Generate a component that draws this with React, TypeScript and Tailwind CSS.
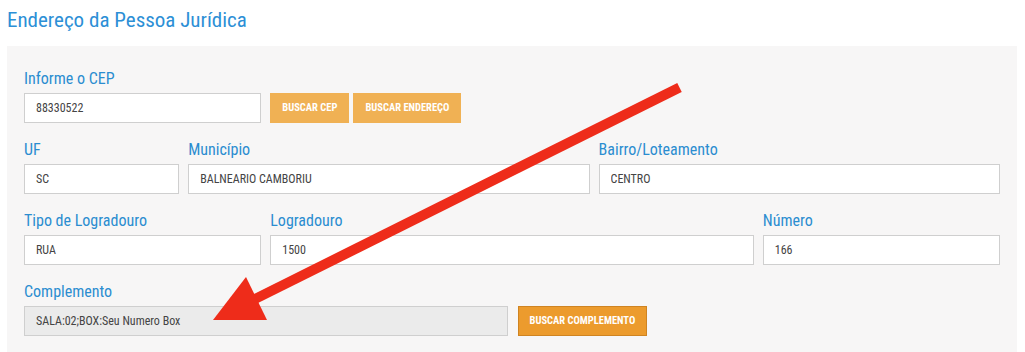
import React from "react";

const font = { fontFamily: '"Liberation Sans Narrow", "Roboto Condensed", "Liberation Sans", sans-serif' };

const Field = ({
  label,
  value,
  span,
  disabled,
}: {
  label: string;
  value: string;
  span: string;
  disabled?: boolean;
}) => (
  <div className={`${span} flex flex-col`}>
    <label className="mb-[3px] h-[22px] text-[16px] leading-[22px] text-[#2b8dd0]">{label}</label>
    <input
      readOnly
      defaultValue={value}
      className={
        disabled
          ? "h-[30px] w-full border border-[#cfcfcf] bg-[#ebebeb] px-[11px] text-[12px] text-[#444] outline-none"
          : "h-[30px] w-full border border-[#cfcfcf] bg-white px-[11px] text-[12px] text-[#444] outline-none"
      }
    />
  </div>
);

export default function App() {
  return (
    <div className="relative h-[352px] w-[1025px] overflow-hidden bg-white" style={font}>
      <h1 className="ml-[7px] mt-[7px] h-[26px] text-[21px] leading-[26px] text-[#2c8fd6]">
        Endereço da Pessoa Jurídica
      </h1>

      <div className="ml-[7px] mt-[13px] h-[320px] w-[1010px] bg-[#f7f6f6] px-[17px] pt-[22px]">
        {/* CEP */}
        <div className="grid grid-cols-12 gap-x-[9px]">
          <Field span="col-span-3" label="Informe o CEP" value="88330522" />
          <div className="col-span-9 flex items-start gap-[4px] pt-[25px]">
            <button className="h-[30px] bg-[#f0b154] px-[12px] text-[10.5px] font-bold text-white">BUSCAR CEP</button>
            <button className="h-[30px] bg-[#f0b154] px-[12px] text-[10.5px] font-bold text-white">BUSCAR ENDEREÇO</button>
          </div>
        </div>

        <div className="mt-[16px] grid grid-cols-12 gap-x-[9px]">
          <Field span="col-span-2" label="UF" value="SC" />
          <Field span="col-span-5" label="Município" value="BALNEARIO CAMBORIU" />
          <Field span="col-span-5" label="Bairro/Loteamento" value="CENTRO" />
        </div>

        <div className="mt-[16px] grid grid-cols-12 gap-x-[9px]">
          <Field span="col-span-3" label="Tipo de Logradouro" value="RUA" />
          <Field span="col-span-6" label="Logradouro" value="1500" />
          <Field span="col-span-3" label="Número" value="166" />
        </div>

        <div className="mt-[16px] grid grid-cols-12 gap-x-[9px]">
          <Field span="col-span-6" label="Complemento" value="SALA:02;BOX:Seu Numero Box" disabled />
          <div className="col-span-6 flex items-start pt-[25px]">
            <button className="ml-px h-[30px] border border-[#cf8422] bg-[#ec9b2d] px-[11px] text-[10.5px] font-bold text-white">
              BUSCAR COMPLEMENTO
            </button>
          </div>
        </div>
      </div>

      {/* arrow annotation */}
      <svg className="pointer-events-none absolute left-0 top-0" width="1025" height="352" viewBox="0 0 1025 352">
        <line x1="679.5" y1="87.5" x2="250" y2="301.5" stroke="#ee2c1a" strokeWidth="10" />
        <polygon points="213,320 246,277 267,320" fill="#ee2c1a" />
      </svg>
    </div>
  );
}
